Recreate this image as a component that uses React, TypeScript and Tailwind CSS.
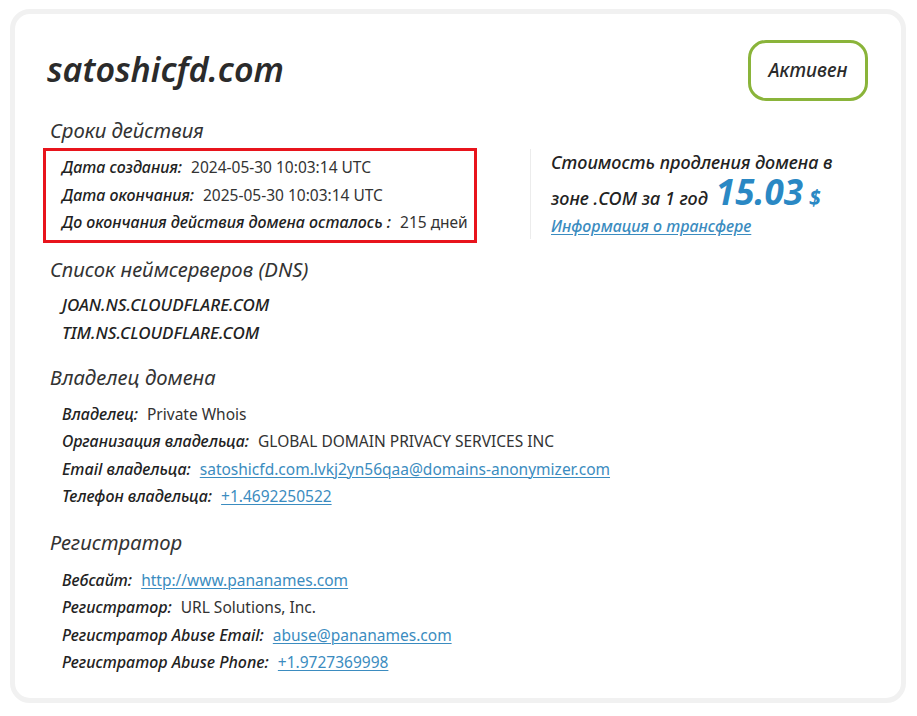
import React from "react";

const font = { fontFamily: '"Noto Sans", "Open Sans", sans-serif' };

type Row = { label: string; value: string; href?: boolean };

const InfoRow = ({ label, value, href }: Row) => (
  <div className="flex items-baseline h-[27.5px] leading-[27.5px]">
    <span className="italic font-medium text-[16px] text-[#222]">{label}</span>
    <span className="ml-[9px] text-[15.5px]">
      {href ? (
        <a className="text-[#3b8cc0] underline underline-offset-2 decoration-1 cursor-pointer">
          {value}
        </a>
      ) : (
        <span className="text-[#333]">{value}</span>
      )}
    </span>
  </div>
);

const SectionTitle = ({ children }: { children: React.ReactNode }) => (
  <h2 className="ml-[35px] text-[20.3px] italic font-normal text-[#333] leading-[28px]">
    {children}
  </h2>
);

const owner: Row[] = [
  { label: "Владелец:", value: "Private Whois" },
  { label: "Организация владельца:", value: "GLOBAL DOMAIN PRIVACY SERVICES INC" },
  { label: "Email владельца:", value: "satoshicfd.com.lvkj2yn56qaa@domains-anonymizer.com", href: true },
  { label: "Телефон владельца:", value: "+1.4692250522", href: true },
];

const registrar: Row[] = [
  { label: "Вебсайт:", value: "http://www.pananames.com", href: true },
  { label: "Регистратор:", value: "URL Solutions, Inc." },
  { label: "Регистратор Abuse Email:", value: "abuse@pananames.com", href: true },
  { label: "Регистратор Abuse Phone:", value: "+1.9727369998", href: true },
];

export default function App() {
  return (
    <div className="w-[917px] h-[716px] bg-white pt-[9px] pl-[10px]" style={font}>
      <div className="w-[896px] h-[694px] rounded-[20px] border-[5px] border-[#f1f1f1] bg-white">
        {/* header */}
        <div className="flex items-start justify-between pl-[32px] pr-[33px] pt-[26px]">
          <h1 className="mt-[7px] text-[34px] leading-[44px] italic font-semibold text-[#2b2b2b]">
            satoshicfd.com
          </h1>
          <div className="w-[120px] h-[61px] rounded-[18px] border-[3px] border-[#8ab43a] flex items-center justify-center">
            <span className="italic font-medium text-[19px] text-[#2b2b2b]">Активен</span>
          </div>
        </div>

        <div className="mt-[15px]">
          <SectionTitle>Сроки действия</SectionTitle>
          <div className="flex items-start mt-[4px]">
            <div className="ml-[28px] w-[434px] border-[3px] border-[#e8141c] pl-[16px] pt-[3px] pb-[3px]">
              <InfoRow label="Дата создания:" value="2024-05-30 10:03:14 UTC" />
              <InfoRow label="Дата окончания:" value="2025-05-30 10:03:14 UTC" />
              <InfoRow label="До окончания действия домена осталось :" value="215 дней" />
            </div>
            <div className="ml-[53px] mt-[1px] h-[90px] border-l border-[#ececec] pl-[20px]">
              <div className="italic font-medium text-[18px] text-[#222] leading-[28px] mt-[-1px]">
                Стоимость продления домена в
              </div>
              <div className="flex items-baseline italic font-medium text-[18px] text-[#222] leading-[32px]">
                <span>зоне .COM за 1 год</span>
                <span className="ml-[8px] text-[35px] font-bold text-[#2a88c4] leading-[32px]">15.03</span>
                <span className="ml-[6px] text-[21px] font-bold text-[#2a88c4]">$</span>
              </div>
              <a className="block italic font-medium text-[16px] text-[#3b8cc0] underline underline-offset-2 leading-[24px] cursor-pointer">
                Информация о трансфере
              </a>
            </div>
          </div>
        </div>

        <div className="mt-[12px]">
          <SectionTitle>Список неймсерверов (DNS)</SectionTitle>
          <div className="ml-[47px] mt-[8px] italic font-medium text-[17px] text-[#222] leading-[28px]">
            <div>JOAN.NS.CLOUDFLARE.COM</div>
            <div>TIM.NS.CLOUDFLARE.COM</div>
          </div>
        </div>

        <div className="mt-[16px]">
          <SectionTitle>Владелец домена</SectionTitle>
          <div className="ml-[47px] mt-[10px]">
            {owner.map((r) => (
              <InfoRow key={r.label} {...r} />
            ))}
          </div>
        </div>

        <div className="mt-[17px]">
          <SectionTitle>Регистратор</SectionTitle>
          <div className="ml-[47px] mt-[11px]">
            {registrar.map((r) => (
              <InfoRow key={r.label} {...r} />
            ))}
          </div>
        </div>
      </div>
    </div>
  );
}
